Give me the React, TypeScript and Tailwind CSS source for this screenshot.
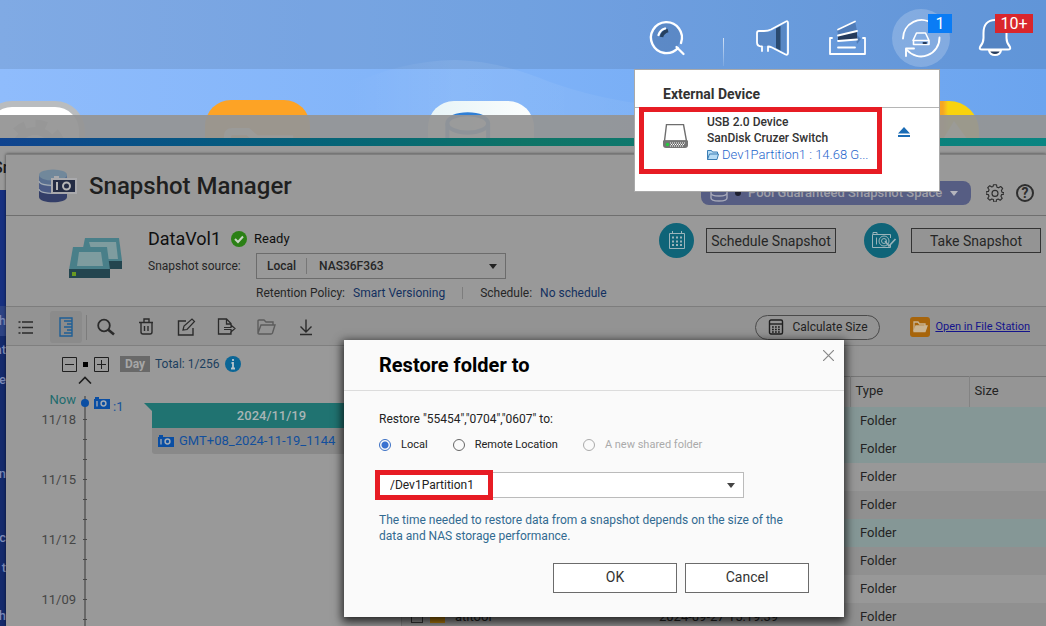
import type { ReactNode } from "react";

const rows = [
  { type: "Folder", selected: true },
  { type: "Folder", selected: true },
  { type: "Folder" },
  { type: "Folder", striped: true },
  { type: "Folder", selected: true },
  { type: "Folder", striped: true },
  { type: "Folder" },
  { type: "Folder", striped: true, name: "atitool", date: "2024-09-27 15:19:39" },
];

const dates = ["11/18", "11/15", "11/12", "11/09"];
const ticks = [24, 44, 64, 84, 104, 124, 144, 164, 184, 204, 224, 244];

function Caret({ className }: { className: string }) {
  return (
    <svg viewBox="0 0 8 5" className={`pointer-events-none h-[5px] w-2 shrink-0 ${className}`}>
      <path d="M0 0h8L4 5z" fill="currentColor" />
    </svg>
  );
}

function Camera() {
  return (
    <svg viewBox="0 0 16 12" className="h-3 w-4 shrink-0">
      <path d="M0 2h1V0h4v2h11v10H0z" fill="#0a4ea3" />
      <path d="M3 4v5.500" stroke="#a3abb5" strokeWidth="1.300" />
      <circle cx="9.500" cy="6.500" r="2.400" fill="none" stroke="#a3abb5" strokeWidth="1.500" />
    </svg>
  );
}

function HeaderButton({ label, children }: { label: string; children: ReactNode }) {
  return (
    <button type="button" aria-label={label} className="relative size-[58px] shrink-0">
      {children}
    </button>
  );
}

function TopBar() {
  return (
    <header className="relative flex h-[69px] shrink-0 items-center justify-end bg-[#182838]/12 pr-[22px] pt-[7px] text-white">
      <HeaderButton label="Search">
        <svg viewBox="0 0 58 58" fill="none" stroke="white" strokeWidth="2.300" strokeLinecap="round">
          <circle cx="28.500" cy="28.500" r="14" fill="#3c659c" fillOpacity="0.350" stroke="none" />
          <path d="M40 39A15.500 15.500 0 1 1 43 34M38.500 38l7 7" />
          <path d="M23.500 28q1-5 6.500-6.500" stroke="#26405f" strokeWidth="3.500" strokeLinecap="butt" />
          <path d="M20.500 26q1.500-5 6.500-6.500" />
        </svg>
      </HeaderButton>
      <span className="ml-[27px] mr-5 mt-[27px] h-7 w-px bg-gradient-to-b from-white/70 to-white/10" />
      <div className="flex gap-4">
        <HeaderButton label="Announcements">
          <svg viewBox="0 0 58 58" fill="none" stroke="white" strokeWidth="1.800" strokeLinecap="round" strokeLinejoin="round">
            <path d="M14 23h12l16-9v30l-15-7H16l-2-3z" fill="#3c659c" fillOpacity="0.350" stroke="none" />
            <path d="M32 19.500l4.500-2.500v24.500L32 39z" fill="#2a4a70" stroke="none" />
            <path d="M18 42v-4.500q-5 0-5-4V24q0-2 2-2h5q4 0 7-1.500L42 12.500q2-1 2 1.500v29.500q0 3-2.500 2L28 38.500q-2-1-4-1V42" />
          </svg>
        </HeaderButton>
        <HeaderButton label="Background tasks">
          <svg viewBox="0 0 58 58" fill="none" stroke="white" strokeWidth="1.800" strokeLinecap="round">
            <path d="M19 20l18-8 2 10-19 4zM37 24l6 6-4 5z" fill="#3c659c" fillOpacity="0.550" stroke="none" />
            <path d="M20 26l19-4v8l-19 2z" fill="#253b5c" stroke="none" />
            <path d="M20 20.500l17-8M20 26.500l19-4.500M20 32l19-1.500M20 38.500h17" />
            <path d="M14 29h-2v16h35V29h-2" strokeLinejoin="round" />
          </svg>
        </HeaderButton>
        <HeaderButton label="External devices">
          <svg viewBox="0 0 58 58" fill="none" stroke="white" strokeWidth="1.900" strokeLinecap="round" strokeLinejoin="round">
            <circle cx="29" cy="29" r="29" fill="white" fillOpacity="0.200" stroke="none" />
            <path d="M11 29.500A18.500 18.500 0 0 1 41 15M47.500 28.500A18.500 18.500 0 0 1 15 41" />
            <path d="M14 47v-7.500h8" />
            <path d="M24.500 24h9l3.500 7.500H21zM21.500 31.500h15.500v4H21.500z" strokeWidth="1.600" />
            <path d="M31.500 34h2.500" stroke="#253b5c" strokeWidth="2" />
          </svg>
          <span className="absolute left-9 top-[5px] h-[19px] w-6 bg-[#0a7cf5] text-center text-base leading-[19px]">1</span>
        </HeaderButton>
        <HeaderButton label="Notifications">
          <svg viewBox="0 0 58 58" fill="none" stroke="white" strokeWidth="2" strokeLinejoin="round">
            <path d="M23 41.500h12q-1 4.500-6 4.500t-6-4.500z" fill="#253b5c" />
            <path d="M16 40.500q-3 0-2-2.500 3.500-4 3.500-9v-5c0-8 4-13 11.500-13s11.500 5 11.500 13v5q0 5 3.500 9 1 2.500-2 2.500z" fill="#3c659c" fillOpacity="0.350" />
          </svg>
          <span className="absolute left-[29px] top-[5px] h-[19px] w-[38px] bg-[#d9262c] text-center text-base leading-[19px]">10+</span>
        </HeaderButton>
      </div>
      <DevicePopover />
    </header>
  );
}

function DevicePopover() {
  return (
    <section className="absolute right-[106px] top-[69px] z-20 h-[123px] w-[306px] border border-[#a9a9a9] bg-white text-[#333]">
      <h2 className="border-b border-[#b5b5b5] pb-[3px] pl-7 pt-[14px] text-sm font-bold leading-5">External Device</h2>
      <div className="flex">
        <div className="-mt-px ml-1 flex h-[67px] w-[243px] gap-[19px] border-[5px] border-[#e71c24] pl-[19px]">
          <svg viewBox="0 0 25 25" className="mt-3 size-[25px] shrink-0">
            <path d="M3.500.500h17L23.500 17h-22z" fill="white" stroke="#6e6e6e" strokeWidth="1.400" />
            <path d="M0 16.500h25V21q0 3-3 3H3q-3 0-3-3z" fill="#757575" />
            <path d="M7 19h15M7 22h14" stroke="white" strokeWidth="1.200" strokeDasharray="1 1" />
            <path d="M8 20.500h14" stroke="white" strokeDasharray="1 1" />
            <circle cx="4.500" cy="20.500" r="1.800" fill="#28c840" />
          </svg>
          <div className="pt-[2px] text-xs font-medium leading-4">
            <p>USB 2.0 Device</p>
            <p>SanDisk Cruzer Switch</p>
            <a href="#partition" className="flex items-center gap-[3px] whitespace-nowrap text-[13px] font-light leading-[18px] text-[#1f66cc]">
              <svg viewBox="0 0 12 10" className="h-[10px] w-3" fill="#b7dcf5" stroke="#3c7fb5">
                <path d="M.500 9.500v-9h4l1 1.500h5v2M.500 9.500l2-5.500h9l-1.500 5.500z" />
              </svg>
              Dev1Partition1 : 14.68 G...
            </a>
          </div>
        </div>
        <button type="button" aria-label="Eject" className="ml-4 mt-[19px] h-[11px] w-3 text-[#1b6cb5]">
          <svg viewBox="0 0 12 11" fill="currentColor">
            <path d="M6 0l6 6.500H0zM0 8h12v2H0z" />
          </svg>
        </button>
      </div>
    </section>
  );
}

function Desktop() {
  return (
    <div className="relative h-[46px] shrink-0">
      <svg viewBox="0 0 350 56" className="pointer-events-none absolute left-[350px] top-[-10px] h-14 w-[350px]">
        <defs>
          <linearGradient id="wave">
            <stop offset="0" stopColor="white" stopOpacity="0" />
            <stop offset="0.300" stopColor="white" stopOpacity="0.080" />
            <stop offset="1" stopColor="white" stopOpacity="0.030" />
          </linearGradient>
        </defs>
        <path d="M0 26Q50 2 105 1 150 2 200 23 270 48 350 49v7H0z" fill="url(#wave)" />
      </svg>
      <div className="absolute left-[-18px] top-8 h-[100px] w-[103px] rounded-[30px] bg-[#b9bcbf] p-[6px]">
        <svg viewBox="0 0 91 88" className="rounded-[24px] bg-white" fill="none" stroke="#b4b8bc">
          <circle cx="47" cy="44" r="20" strokeWidth="8" />
          <circle cx="47" cy="44" r="27" strokeWidth="9" strokeDasharray="11 10.200" />
        </svg>
      </div>
      <div className="absolute left-[205px] top-[31px] h-[100px] w-[105px] rounded-[26px] bg-[#fda325]">
        <svg viewBox="0 0 103 100" fill="none" stroke="#fff3dc" strokeWidth="7">
          <path d="M22 80V36q0-5 5-5h15l8 7h33v42z" />
        </svg>
      </div>
      <div className="absolute left-[428px] top-8 h-[100px] w-[106px] rounded-[26px] bg-gradient-to-r from-[#e7f4f7] to-[#fbfdfd]">
        <svg viewBox="0 0 104 100" fill="none" stroke="#2f7fd6" strokeWidth="4">
          <ellipse cx="39" cy="22" rx="20" ry="9" />
          <path d="M19 22v40h40V22" />
        </svg>
      </div>
      <div className="absolute right-[67px] top-8 h-[100px] w-[103px] rounded-[30px] bg-gradient-to-r from-[#f5a623] from-65% to-[#f8d30e] to-70%">
        <svg viewBox="0 0 103 100">
          <path d="M60 50L78 20l22 30z" fill="#fff4b0" />
        </svg>
      </div>
    </div>
  );
}

// the part of the underlying window's menu that stays visible left of the dialog
function Sidebar() {
  return (
    <aside className="flex w-[6px] shrink-0 flex-col overflow-hidden text-[13px] font-medium leading-5 text-[#7d8bb8]">
      <div className="-ml-[7px] h-10 pt-[2px] text-base font-medium text-[#1c1c1c]">Sn</div>
      <div className="flex flex-1 flex-col items-end bg-[#142a6c]">
        <div className="h-[116px] w-full bg-[#173080]" />
        <div className="flex h-[30px] w-full items-center justify-end bg-[#2d4384]">h</div>
        <span className="h-[30px] pt-1">at</span>
        <span className="h-[98px] pt-1">ge</span>
        <span className="h-16">n</span>
        <span className="h-[30px]">c</span>
        <span className="h-12">t</span>
        <span className="h-5">ch</span>
      </div>
    </aside>
  );
}

function DialogHeader() {
  return (
    <div className="flex h-[61px] shrink-0 justify-between border-b border-[#6f6f6f] pl-8 pr-[9px]">
      <div className="flex items-center gap-[11px] pt-[2px]">
        <svg viewBox="0 0 40 34" className="h-[34px] w-10">
          <path d="M1 6v22c0 7 28 7 28 0V6z" fill="#333e68" />
          <path d="M1 6v14c0 6 28 6 28 0V6z" fill="#4a5a85" />
          <path d="M1 6v7c0 6 28 6 28 0V6z" fill="#596f90" />
          <ellipse cx="15" cy="6" rx="14" ry="5.500" fill="#71889b" />
          <path d="M1 12c0 6 28 6 28 0M1 20c0 6 28 6 28 0" fill="none" stroke="#a3abb5" strokeWidth="1.200" />
          <path d="M13 9h3V7h5v2h18v16H13z" fill="#a9a9ac" />
          <path d="M15 11h22v12H15z" fill="#242c44" />
          <path d="M19 13v8" stroke="#b5b5b5" strokeWidth="2" />
          <circle cx="28.500" cy="17" r="3.500" fill="none" stroke="#b5b5b5" strokeWidth="2" />
        </svg>
        <h1 className="text-2xl font-medium text-[#1f1f1f]">Snapshot Manager</h1>
      </div>
      <div className="flex items-center gap-[15px] self-end pb-[10px]">
        <button type="button" className="flex h-6 w-[270px] items-center rounded-[8px] bg-[#565d83] px-[9px] text-[13px] font-medium text-[#a0a0a8]">
          <svg viewBox="0 0 18 18" className="size-[18px]" fill="none" stroke="#a6a8b8" strokeWidth="1.400">
            <path d="M1 4v10c0 4 16 4 16 0V4M1 9c0 4 16 4 16 0M1 4c0 4 16 4 16 0s-16-4-16 0" />
          </svg>
          <span className="ml-[7px] size-[6px] rounded-full bg-[#1e2030]" />
          <span className="ml-[7px] whitespace-nowrap">Pool Guaranteed Snapshot Space</span>
          <Caret className="ml-2 text-[#b5b5bd]" />
        </button>
        <button type="button" aria-label="Settings" className="size-[18px]">
          <svg viewBox="0 0 24 24" fill="none" stroke="#2e2e2e" strokeWidth="1.500" strokeLinejoin="round">
            <path d="M10 1h4l.600 3.200 2.200.900 2.700-1.800 2.700 2.700-1.700 2.700.900 2.200L24 11.500v2l-3.200.600-.900 2.200 1.700 2.700-2.700 2.700-2.700-1.700-2.200.900L13.500 24h-3l-.600-3.200-2.200-.900L5 21.600 2.300 19 4 16.300l-.900-2.200L0 13.500v-3l3.200-.600.900-2.200L2.300 5 5 2.300 7.700 4l1.700-.700z" />
            <circle cx="12" cy="12.500" r="4" />
          </svg>
        </button>
        <button type="button" aria-label="Help" className="-ml-[3px] mr-[3px] size-[18px] rounded-full border-2 border-[#2e2e2e] text-sm font-bold leading-[14px] text-[#2e2e2e]">?</button>
      </div>
    </div>
  );
}

function VolumeInfo() {
  return (
    <div className="flex h-[91px] shrink-0 items-start border-b border-[#7d7d7d] pl-[63px] pr-[5px] text-xs text-[#262626]">
      <svg viewBox="0 0 53 40" className="mt-[22px] h-10 w-[53px] shrink-0">
        <path d="M16 0h34l3 23v8H30L13 15z" fill="#497f89" />
        <path d="M20 4h27l2 17H25z" fill="#7e9c9f" />
        <path d="M35 23h18v8H35z" fill="#23454f" />
        <path d="M4 9h34l3 23H0z" fill="#497f89" />
        <path d="M10 14h22l2 14H8z" fill="#7e9c9f" />
        <path d="M0 31h41v9H0z" fill="#23454f" />
        <path d="M3 34h4v4H3z" fill="#6a9a22" />
      </svg>
      <div className="ml-[26px] pt-[11px]">
        <div className="flex h-6 items-center">
          <span className="text-lg text-[#0f0f0f]">DataVol1</span>
          <svg viewBox="0 0 16 16" className="ml-[10px] size-4">
            <circle cx="8" cy="8" r="8" fill="#2b8015" />
            <path d="M4 8l3 3 5-5.500" fill="none" stroke="#c9d6c4" strokeWidth="2" />
          </svg>
          <span className="ml-[7px] text-[13px] text-[#0f0f0f]">Ready</span>
        </div>
        <div className="mt-[2px] flex items-center">
          <label htmlFor="source" className="w-[108px]">Snapshot source:</label>
          <div className="flex h-[26px] w-[250px] items-center border border-[#6c6c6c] pl-[10px] font-medium">
            <span>Local</span>
            <span className="ml-[10px] h-4 w-px bg-[#777]" />
            <select id="source" className="-mr-4 flex-1 appearance-none pl-3 outline-none">
              <option>NAS36F363</option>
            </select>
            <Caret className="mr-2 text-[#222]" />
          </div>
        </div>
        <div className="ml-[108px] mt-1 flex h-5 items-center whitespace-nowrap">
          <span>Retention Policy:</span>
          <a href="#retention" className="ml-2 text-[#13305f]">Smart Versioning</a>
          <span className="mx-[17px] h-3 w-px bg-[#7d7d7d]" />
          <span>Schedule:</span>
          <a href="#schedule" className="ml-2 text-[#13305f]">No schedule</a>
        </div>
      </div>
      <div className="ml-auto mt-[7px] flex shrink-0 items-center text-sm">
        <svg viewBox="0 0 35 35" className="size-[35px]" fill="none" stroke="#9bb4ba">
          <circle cx="17.500" cy="17.500" r="17.500" fill="#0f6478" stroke="none" />
          <path d="M10.500 10.500h15v15h-15zM13.500 8v3M22.500 8v3" />
          <path d="M13 14.500h10M13 18.500h10M13 22h10" strokeWidth="2" strokeDasharray="2 2" />
        </svg>
        <button type="button" className="ml-3 h-[25px] w-[130px] whitespace-nowrap border border-[#333] bg-[#949494]">Schedule Snapshot</button>
        <svg viewBox="0 0 35 35" className="ml-7 size-[35px]" fill="none" stroke="#9bb4ba">
          <circle cx="17.500" cy="17.500" r="17.500" fill="#0f6478" stroke="none" />
          <path d="M26.500 15v-3.500h-18v13h18V22M9 11V9.500h4v2M12.500 14.500v7" />
          <circle cx="20" cy="18" r="5" />
          <circle cx="20" cy="18" r="2.500" />
          <path d="M21 18l4 5 6.500-7" strokeWidth="1.600" />
        </svg>
        <button type="button" className="ml-3 h-[25px] w-[130px] whitespace-nowrap border border-[#333] bg-[#949494]">Take Snapshot</button>
      </div>
    </div>
  );
}

function ToolButton({ label, active, children }: { label: string; active?: boolean; children: ReactNode }) {
  return (
    <button
      type="button"
      aria-label={label}
      className={`grid size-8 place-items-center rounded-[3px] ${active ? "bg-[#8b8b8b]" : ""}`}
    >
      <svg viewBox="0 0 20 20" className="size-5" fill="none" stroke="#2b2b2b" strokeWidth="1.400">
        {children}
      </svg>
    </button>
  );
}

function Toolbar() {
  return (
    <div className="flex h-[39px] shrink-0 items-center border-b border-[#7f7f7f] bg-[#939393] pl-1 pr-4 pt-[2px]">
      <div className="flex gap-2">
        <ToolButton label="List view">
          <path d="M6 5h11M6 10.500h11M6 16h11" strokeWidth="1.600" />
          <path d="M2.500 5h2M2.500 10.500h2M2.500 16h2" strokeWidth="1.600" />
        </ToolButton>
        <ToolButton label="Timeline view" active>
          <path d="M4 1h12v18H4zM8 4h8M11 7h5M8 10h8M11 13h5M8 16h8" stroke="#1f5f96" />
        </ToolButton>
      </div>
      <span className="ml-1 mr-[3px] h-[25px] w-px bg-[#7c7c7c]" />
      <div className="flex gap-2">
        <ToolButton label="Search">
          <circle cx="8" cy="8.500" r="5.800" strokeWidth="1.800" />
          <path d="M12 12.500l6 5" strokeWidth="2.600" />
        </ToolButton>
        <ToolButton label="Delete">
          <path d="M3 5.500h14M8 5V2h5v3M5 5.500V15q0 2 2 2h7q2 0 2-2V5.500M8.500 9v5M12 9v5" />
        </ToolButton>
        <ToolButton label="Edit">
          <path d="M10 4H2.500v14H17v-7" />
          <path d="M7 13l1-4 8-7 2.500 2.500-7.500 8z" strokeWidth="1.200" />
        </ToolButton>
        <ToolButton label="Restore to">
          <path d="M15 8V6.500L10.500 2H2.500v15H15v-2M10.500 2v5H15" strokeWidth="1.300" />
          <path d="M8 10.500h7V8l4 3.500-4 3.500v-2.500H8" strokeWidth="1.200" />
        </ToolButton>
        <ToolButton label="Open folder">
          <path d="M2 16V4q0-1 1-1h5l2 2h7v3M2 16l3-8h14l-2.500 8q-.500 1-1.500 1H3q-1 0-1-1z" stroke="#5c5c5c" />
        </ToolButton>
        <ToolButton label="Download">
          <path d="M10 2.500v12M4.500 9.500l5.500 5.500 5.500-5.500M4 17.500h12" />
        </ToolButton>
      </div>
      <button type="button" className="ml-auto flex h-[25px] w-[125px] shrink-0 items-center gap-2 whitespace-nowrap rounded-full border border-[#4a4a4a] pl-3 text-xs text-[#222]">
        <svg viewBox="0 0 16 16" className="size-4" fill="none" stroke="#1f1f1f" strokeWidth="1.400">
          <rect x="1.500" y="1" width="13" height="14" rx="1.500" />
          <path d="M2 5h12" />
          <path d="M4 8h9M4 10.500h9M4 13h9" strokeWidth="1.500" strokeDasharray="1.800 1.200" />
        </svg>
        Calculate Size
      </button>
      <a href="#file-station" className="ml-[30px] flex shrink-0 items-center gap-[5px] whitespace-nowrap text-[11px] text-[#14148c] underline">
        <svg viewBox="0 0 20 20" className="size-5" fill="none" stroke="#c9b594" strokeWidth="1.300">
          <rect width="20" height="20" rx="3" fill="#a7650c" stroke="none" />
          <path d="M4 14V5h4l1.500 2H15v2" />
          <path d="M4 14l2-5h11l-2 5.500H4z" fill="#c9b594" />
        </svg>
        Open in File Station
      </a>
    </div>
  );
}

function Timeline() {
  return (
    <div className="w-[396px] shrink-0 overflow-hidden border-r border-[#7f7f7f] pt-[10px]">
      <div className="flex h-4 items-center pl-14 text-xs">
        <button type="button" aria-label="Zoom out" className="size-[15px]">
          <svg viewBox="0 0 15 15" fill="none" stroke="#1f1f1f">
            <path d="M.500.500h14v14H.500zM3 7.500h9" />
          </svg>
        </button>
        <span className="mx-[6px] size-[5px] bg-black" />
        <button type="button" aria-label="Zoom in" className="size-[15px]">
          <svg viewBox="0 0 15 15" fill="none" stroke="#1f1f1f">
            <path d="M.500.500h14v14H.500zM3 7.500h9M7.500 3v9" />
          </svg>
        </button>
        <span className="ml-[11px] w-[30px] bg-[#696969] text-center font-bold leading-4 text-[#a6a6a6]">Day</span>
        <span className="ml-[5px] w-[66px] whitespace-nowrap text-[#1c3f5e]">Total: 1/256</span>
        <svg viewBox="0 0 16 16" className="ml-1 size-4">
          <circle cx="8" cy="8" r="8" fill="#0b6696" />
          <path d="M8 3v2M6.500 7H8v5M6 12.500h4" fill="none" stroke="#b8c4cc" strokeWidth="1.800" />
        </svg>
      </div>
      <button type="button" aria-label="Scroll up" className="ml-[72px] mt-1 block h-2 w-[14px]">
        <svg viewBox="0 0 14 8" fill="none" stroke="#1f1f1f" strokeWidth="1.600">
          <path d="M1 7.500l6-6 6 6" />
        </svg>
      </button>
      <div className="mt-[11px] flex">
        <div className="w-[70px] text-right text-[13px] leading-5 text-[#454545]">
          <p className="-mt-[5px] text-[#1d6b6d]">Now</p>
          {dates.map((date) => (
            <p key={date} className="h-[60px]">{date}</p>
          ))}
        </div>
        <svg viewBox="0 0 10 250" className="ml-1 h-[250px] w-[10px]">
          <path d="M5 1v249" stroke="#686868" strokeWidth="2" />
          {ticks.map((y) => (
            <path key={y} d={`M3 ${y + 0.5}h4`} stroke="#484848" />
          ))}
          <circle cx="5" cy="8" r="4" fill="#0a4ea3" />
        </svg>
        <div className="ml-1 mt-[2px] flex h-4 w-[50px] gap-[3px] text-[13px] leading-5 text-[#16529a]">
          <Camera />
          <span>:1</span>
        </div>
        <svg viewBox="0 0 8 8" className="mt-2 size-2 shrink-0">
          <path d="M0 0h8v8z" fill="#207371" />
        </svg>
        <div className="mr-[10px] mt-2 flex-1 text-[13px]">
          <p className="bg-[#207371] text-center font-medium leading-[25px] text-[#a9b5b5]">2024/11/19</p>
          <a href="#snapshot" className="flex h-[26px] items-center gap-[5px] rounded-b-[3px] bg-[#898989] pl-[6px] text-[#124f9c]">
            <Camera />
            GMT+08_2024-11-19_1144
          </a>
        </div>
      </div>
    </div>
  );
}

function FileTable() {
  return (
    <div className="min-w-0 flex-1 overflow-hidden bg-[#959595] pt-[30px]">
      <table className="w-full table-fixed border-t border-[#767676] text-left text-[13px] text-[#232323]">
        <colgroup>
          <col className="w-7" />
          <col className="w-[221px]" />
          <col className="w-[199px]" />
          <col className="w-[119px]" />
          <col />
        </colgroup>
        <thead>
          <tr className="h-[30px]">
            <td colSpan={3} />
            <th scope="col" className="border-l border-[#838383] pl-[5px] pb-[2px] font-normal">Type</th>
            <th scope="col" className="border-l border-[#838383] pl-[5px] pb-[2px] font-normal">Size</th>
          </tr>
        </thead>
        <tbody>
          {rows.map((row, index) => (
            <tr
              key={index}
              className={`h-7 ${row.selected ? "bg-[#859796]" : row.striped ? "bg-[#909090]" : "bg-[#989898]"}`}
            >
              <td className="pl-[9px]">
                <input
                  type="checkbox"
                  aria-label={`Select row ${index + 1}`}
                  defaultChecked={row.selected}
                  className="block size-3 appearance-none border border-[#333]"
                />
              </td>
              <td>
                <span className="flex items-center gap-[10px]">
                  <svg viewBox="0 0 15 12" className="h-3 w-[15px]">
                    <path d="M0 0h6l1.500 2H15v10H0z" fill="#b07a0c" />
                  </svg>
                  {row.name}
                </span>
              </td>
              <td className="pl-2">{row.date}</td>
              <td className="pl-[10px]">{row.type}</td>
              <td />
            </tr>
          ))}
        </tbody>
      </table>
    </div>
  );
}

function RestoreDialog() {
  const radio =
    "size-3 appearance-none rounded-full border border-[#666] checked:border-[#3a6fc4] checked:bg-[radial-gradient(circle,#3a72d0_3px,transparent_4px)] disabled:border-[#aaa]";

  return (
    <div
      role="dialog"
      aria-labelledby="restore-title"
      className="absolute left-[344px] top-[340px] z-10 w-[500px] bg-[#fafafa] text-xs text-[#222] shadow-[0_3px_9px_2px_rgba(0,0,0,0.75)]"
    >
      <div className="flex h-[51px] justify-between border-b border-[#dcdcdc] pl-[35px] pr-[10px]">
        <h2 id="restore-title" className="self-center text-xl font-bold text-black">Restore folder to</h2>
        <button type="button" aria-label="Close" className="mt-[10px] size-[11px]">
          <svg viewBox="0 0 11 11" stroke="#888" strokeWidth="1.200">
            <path d="M0 0l11 11M11 0L0 11" />
          </svg>
        </button>
      </div>
      <div className="px-[35px] pb-6 pt-5">
        <p className="leading-4">Restore "55454","0704","0607" to:</p>
        <div className="mt-[10px] flex h-4 items-center text-[11px]">
          <label className="flex items-center gap-[10px]">
            <input type="radio" name="target" defaultChecked className={radio} />
            Local
          </label>
          <label className="ml-[25px] flex items-center gap-[10px]">
            <input type="radio" name="target" className={radio} />
            Remote Location
          </label>
          <label className="ml-[25px] flex items-center gap-[10px] text-[#aaa]">
            <input type="radio" name="target" disabled className={radio} />
            A new shared folder
          </label>
        </div>
        <div className="relative mt-[19px] flex h-[26px] w-[365px] items-center border border-[#bbb] bg-white">
          <select aria-label="Destination" className="-mr-4 h-full flex-1 appearance-none pl-[10px] outline-none">
            <option>/Dev1Partition1</option>
          </select>
          <Caret className="mr-2 text-[#444]" />
          <span className="pointer-events-none absolute -left-[5px] -top-[3px] h-[30px] w-[118px] border-[5px] border-[#e71c24]" />
        </div>
        <p className="mt-[14px] leading-4 text-[#326a91]">
          The time needed to restore data from a snapshot depends on the size of the data and NAS storage performance.
        </p>
        <div className="mt-[19px] flex justify-end gap-2 text-sm text-[#333]">
          <button type="button" className="h-[30px] w-[124px] border border-[#6b6b6b] bg-white pb-[2px]">OK</button>
          <button type="button" className="h-[30px] w-[124px] border border-[#6b6b6b] bg-white pb-[2px]">Cancel</button>
        </div>
      </div>
    </div>
  );
}

export default function App() {
  return (
    <div className="relative flex h-screen flex-col overflow-hidden bg-gradient-to-r from-[#8fbcfc] via-[#7eb2f8] to-[#6ba4ee] font-['Roboto',sans-serif]">
      <TopBar />
      <Desktop />
      <main className="relative flex min-h-0 flex-1 flex-col">
        <div className="h-[23px] shrink-0 bg-[#959595]/94" />
        <div className="h-2 shrink-0 bg-gradient-to-r from-[#10438f] via-[#0f7467] via-50% to-[#0a8582]" />
        <div className="h-2 shrink-0 bg-[#999]" />
        <div className="flex min-h-0 flex-1 bg-[#999]">
          <Sidebar />
          <div className="flex min-w-0 flex-1 flex-col border-t border-[#7f7f7f] bg-[#999] shadow-[0_0_3px_rgba(0,0,0,0.6)]">
            <DialogHeader />
            <VolumeInfo />
            <Toolbar />
            <div className="flex min-h-0 flex-1">
              <Timeline />
              <FileTable />
            </div>
          </div>
        </div>
      </main>
      <RestoreDialog />
    </div>
  );
}
